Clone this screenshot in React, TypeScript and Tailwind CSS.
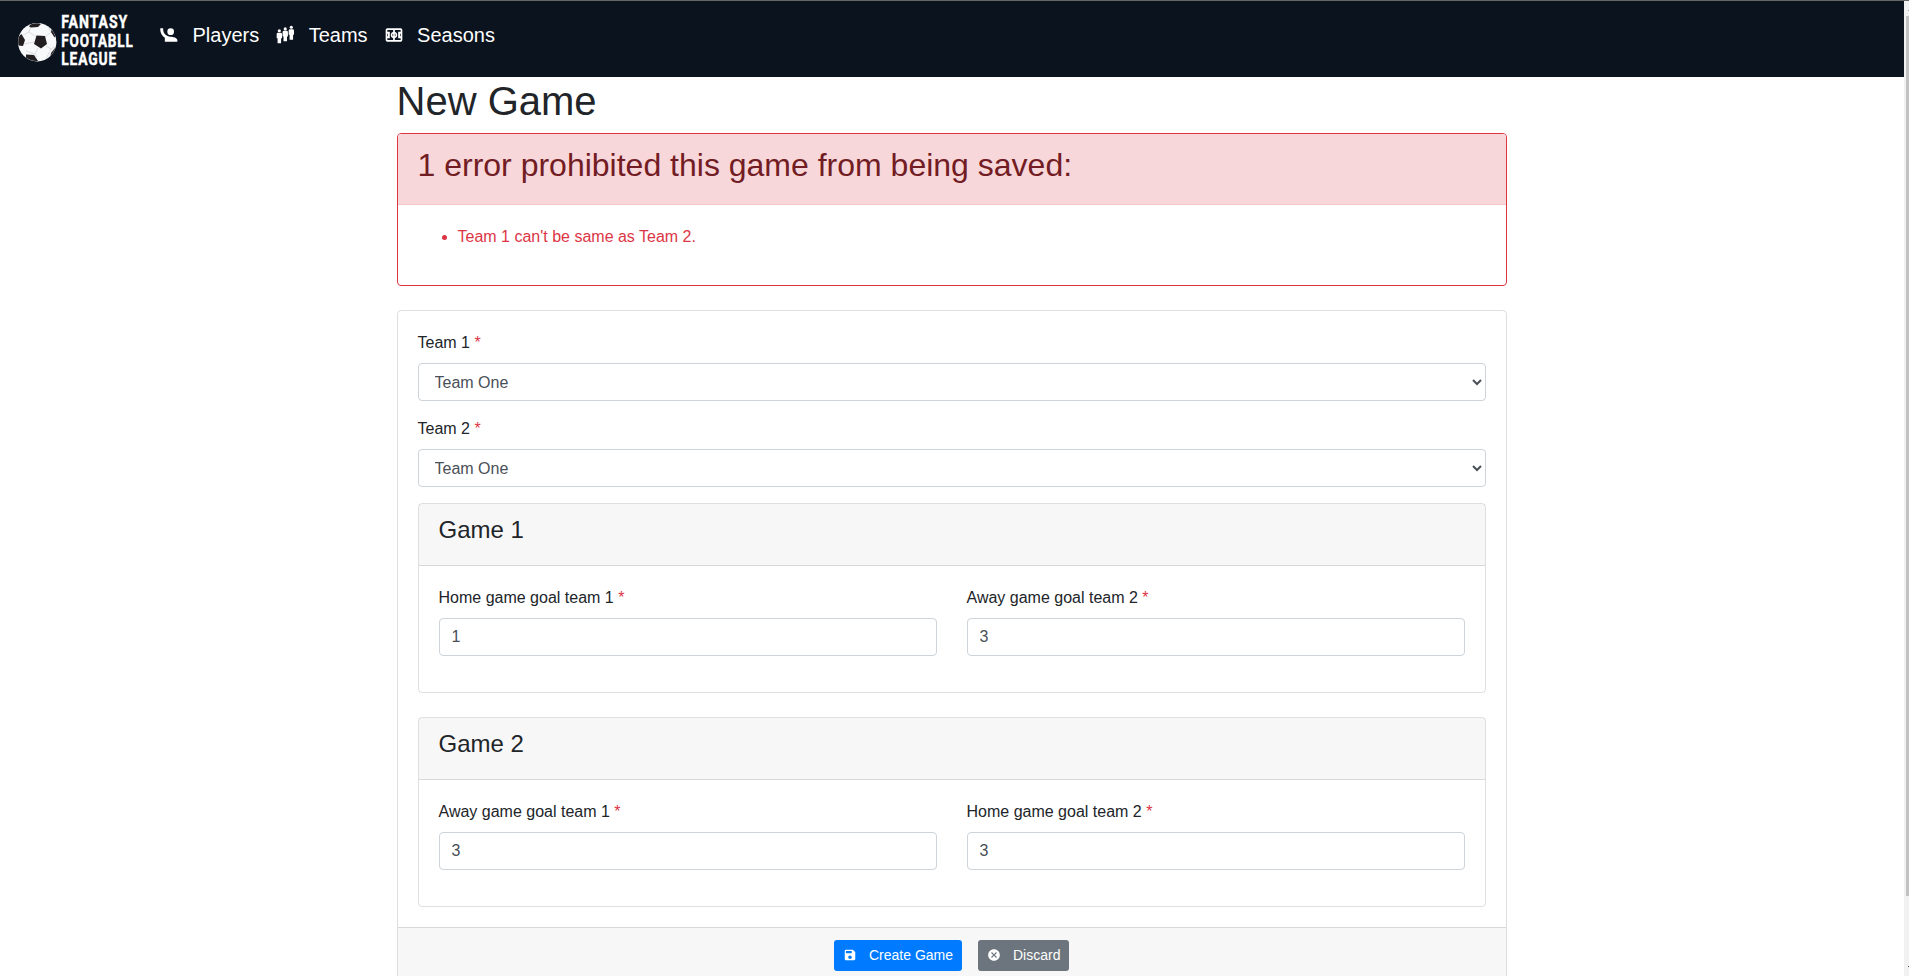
import { ReactNode } from 'react';
import { MdCancel, MdSave } from 'react-icons/md';

function Logo() {
  return (
    <svg width="150" height="76" viewBox="0 1 150 76" className="block shrink-0" aria-label="Fantasy Football League">
      <defs>
        <clipPath id="ball">
          <circle cx="37.2" cy="42.2" r="19" />
        </clipPath>
      </defs>
      <circle cx="37.2" cy="42.2" r="19.2" fill="#f8f9fa" />
      <g clipPath="url(#ball)">
        <path
          d="M36 36.5 L29 32 M45 37 L51 32 M46 46 L51 49 M38 48 L35 54 M34 42 L24 44 M29 32 L31 26 M29 32 L23 35 M51 32 L48 26 M51 32 L56 36 M51 49 L56 46 M51 49 L46 59 M35 54 L26 51 M35 54 L37 57"
          stroke="#d5d6d8"
          strokeWidth="0.8"
          fill="none"
        />
        <path d="M36.5 35.5 L45 36 L47 44 L41 48.5 L34 44 Z" fill="#231f20" />
        <path d="M29 26.5 L31 24 L37 22 L41 24 L38 27 L31 27.5 Z" fill="#231f20" />
        <path d="M17 38 L21.5 34 L25 40 L23 46 L17.5 45.5 Z" fill="#231f20" />
        <path d="M26 54.5 L34 55 L38 61 L32 62 L26 58 Z" fill="#231f20" />
        <path d="M52 28 L56 35 L54.5 37.5 L51 32 Z" fill="#231f20" />
        <path d="M51 53 L55 48 L56 52 L50 58 Z" fill="#231f20" />
      </g>
      <g
        fill="#fff"
        stroke="#fff"
        strokeWidth="0.45"
        fontFamily="'Roboto', 'Liberation Sans', sans-serif"
        fontWeight="700"
        fontSize="18.6"
        letterSpacing="1.2"
      >
        <text x="61.2" y="28" textLength="67" lengthAdjust="spacingAndGlyphs">FANTASY</text>
        <text x="61.2" y="46.5" textLength="72.5" lengthAdjust="spacingAndGlyphs">FOOTABLL</text>
        <text x="61.2" y="64.8" textLength="56" lengthAdjust="spacingAndGlyphs">LEAGUE</text>
      </g>
    </svg>
  );
}

function PlayerIcon() {
  return (
    <svg width="20" height="20" viewBox="0 0 24 24" fill="currentColor">
      <path d="M1.5 4V5.5C1.5 9.65 3.71 13.28 7 15.3V20H22V18C22 15.34 16.67 14 14 14H13.75C9 14 5 10 5 5.5V4M14 4A4 4 0 0 0 10 8A4 4 0 0 0 14 12A4 4 0 0 0 18 8A4 4 0 0 0 14 4Z" />
    </svg>
  );
}

function Figure({ x, y }: { x: number; y: number }) {
  return (
    <g transform={`translate(${x} ${y})`}>
      <circle cx="3.2" cy="1.9" r="1.9" />
      <path d="M1.6 4.2H4.8A1.6 1.6 0 0 1 6.4 5.8V11H5.3V16.8H1.1V11H0V5.8A1.6 1.6 0 0 1 1.6 4.2Z" />
    </g>
  );
}

function TeamIcon() {
  return (
    <svg width="20" height="20" viewBox="0 0 24 24" fill="currentColor">
      <Figure x={2} y={5} />
      <Figure x={9.1} y={2.8} />
      <Figure x={16.4} y={0.8} />
    </svg>
  );
}

function FieldIcon() {
  return (
    <svg width="20" height="20" viewBox="0 0 24 24" fill="currentColor" fillRule="evenodd">
      <path d="M4 4A2 2 0 0 0 2 6V18A2 2 0 0 0 4 20H20A2 2 0 0 0 22 18V6A2 2 0 0 0 20 4ZM4 6H11V8.13A4 4 0 0 0 11 15.87V18H4V16H7V8H4ZM13 6H20V8H17V16H20V18H13V15.87A4 4 0 0 0 13 8.13ZM11 10.3V13.7A2 2 0 0 1 11 10.3ZM13 10.3A2 2 0 0 1 13 13.7ZM4 10.5H4.8V13.5H4ZM19.2 10.5H20V13.5H19.2Z" />
    </svg>
  );
}

function NavLink({ icon, children }: { icon: ReactNode; children: ReactNode }) {
  return (
    <a className="flex items-center gap-[13.5px] text-xl leading-[30px] text-white" href="#">
      {icon}
      {children}
    </a>
  );
}

function Label({ children }: { children: ReactNode }) {
  return (
    <label className="mb-2 block leading-6">
      {children} <span className="text-[#dc3545]">*</span>
    </label>
  );
}

function TeamSelect({ label }: { label: string }) {
  return (
    <div className="mb-4">
      <Label>{label}</Label>
      <select className="block h-[38px] w-full rounded border border-[#ced4da] bg-white px-3 py-1.5 text-base text-[#495057]">
        <option>Team One</option>
      </select>
    </div>
  );
}

function GoalField({ label, value }: { label: string; value: string }) {
  return (
    <div className="mb-4">
      <Label>{label}</Label>
      <input
        defaultValue={value}
        className="block h-[38px] w-full rounded border border-[#ced4da] bg-white px-3 py-1.5 text-base text-[#495057]"
      />
    </div>
  );
}

function GameCard({ title, children }: { title: string; children: ReactNode }) {
  return (
    <section className="rounded border border-black/[.125]">
      <header className="border-b border-black/[.125] bg-black/[.03] px-5 py-3">
        <h4 className="mb-2 text-2xl leading-[1.2]">{title}</h4>
      </header>
      <div className="grid grid-cols-2 gap-[30px] p-5">{children}</div>
    </section>
  );
}

export default function App() {
  return (
    <div className="flex h-[976px] flex-col overflow-hidden border-t border-[#656565] bg-white font-['Liberation_Sans',Arial,sans-serif] text-base text-[#212529]">
      <div className="flex min-h-0 flex-1">
        <div className="flex min-w-0 flex-1 flex-col overflow-hidden">
          <nav className="flex h-[76px] shrink-0 bg-[#0b131e]">
            <Logo />
            <div className="ml-[9px] flex h-[68px] items-center gap-4">
              <NavLink icon={<PlayerIcon />}>Players</NavLink>
              <NavLink icon={<TeamIcon />}>Teams</NavLink>
              <NavLink icon={<FieldIcon />}>Seasons</NavLink>
            </div>
          </nav>

          <div className="flex shrink-0 justify-center pr-px">
            <main className="w-[1140px] px-[15px]">
              <h1 className="mb-2 text-[40px] leading-[1.2]">New Game</h1>

              <section className="mb-6 rounded border border-[#dc3545]">
                <header className="rounded-t-[3px] border-b border-[#f5c6cb] bg-[#f8d7da] px-5 py-3 text-[#721c24]">
                  <h2 className="mb-2 text-[32px] leading-[1.2]">1 error prohibited this game from being saved:</h2>
                </header>
                <div className="p-5 text-[#dc3545]">
                  <ul className="mb-4 list-disc pl-10 leading-6">
                    <li>Team 1 can't be same as Team 2.</li>
                  </ul>
                </div>
              </section>

              <form className="rounded border border-black/[.125]">
                <div className="p-5">
                  <TeamSelect label="Team 1" />
                  <TeamSelect label="Team 2" />
                  <div className="flex flex-col gap-6">
                    <GameCard title="Game 1">
                      <GoalField label="Home game goal team 1" value="1" />
                      <GoalField label="Away game goal team 2" value="3" />
                    </GameCard>
                    <GameCard title="Game 2">
                      <GoalField label="Away game goal team 1" value="3" />
                      <GoalField label="Home game goal team 2" value="3" />
                    </GameCard>
                  </div>
                </div>
                <footer className="flex justify-center gap-4 border-t border-black/[.125] bg-black/[.03] px-5 py-3">
                  <button
                    type="button"
                    className="flex h-[31px] w-32 items-center gap-3 rounded-[3px] bg-[#007bff] pl-[9px] text-sm whitespace-nowrap text-white"
                  >
                    <MdSave size={14} />
                    Create Game
                  </button>
                  <button
                    type="button"
                    className="flex h-[31px] w-[91px] items-center gap-3 rounded-[3px] bg-[#6c757d] pl-[9px] text-sm whitespace-nowrap text-white"
                  >
                    <MdCancel size={14} />
                    Discard
                  </button>
                </footer>
              </form>
            </main>
          </div>
        </div>

        <div className="flex w-[5px] shrink-0 flex-col items-end bg-[#f1f1f1] pt-[9px]">
          <div className="h-px w-px bg-[#a3a3a3]" />
          <div className="mt-[5px] h-[880px] w-[3px] bg-[#c1c1c1]" />
          <div className="mt-[70px] h-px w-px bg-[#505050]" />
        </div>
      </div>
    </div>
  );
}
